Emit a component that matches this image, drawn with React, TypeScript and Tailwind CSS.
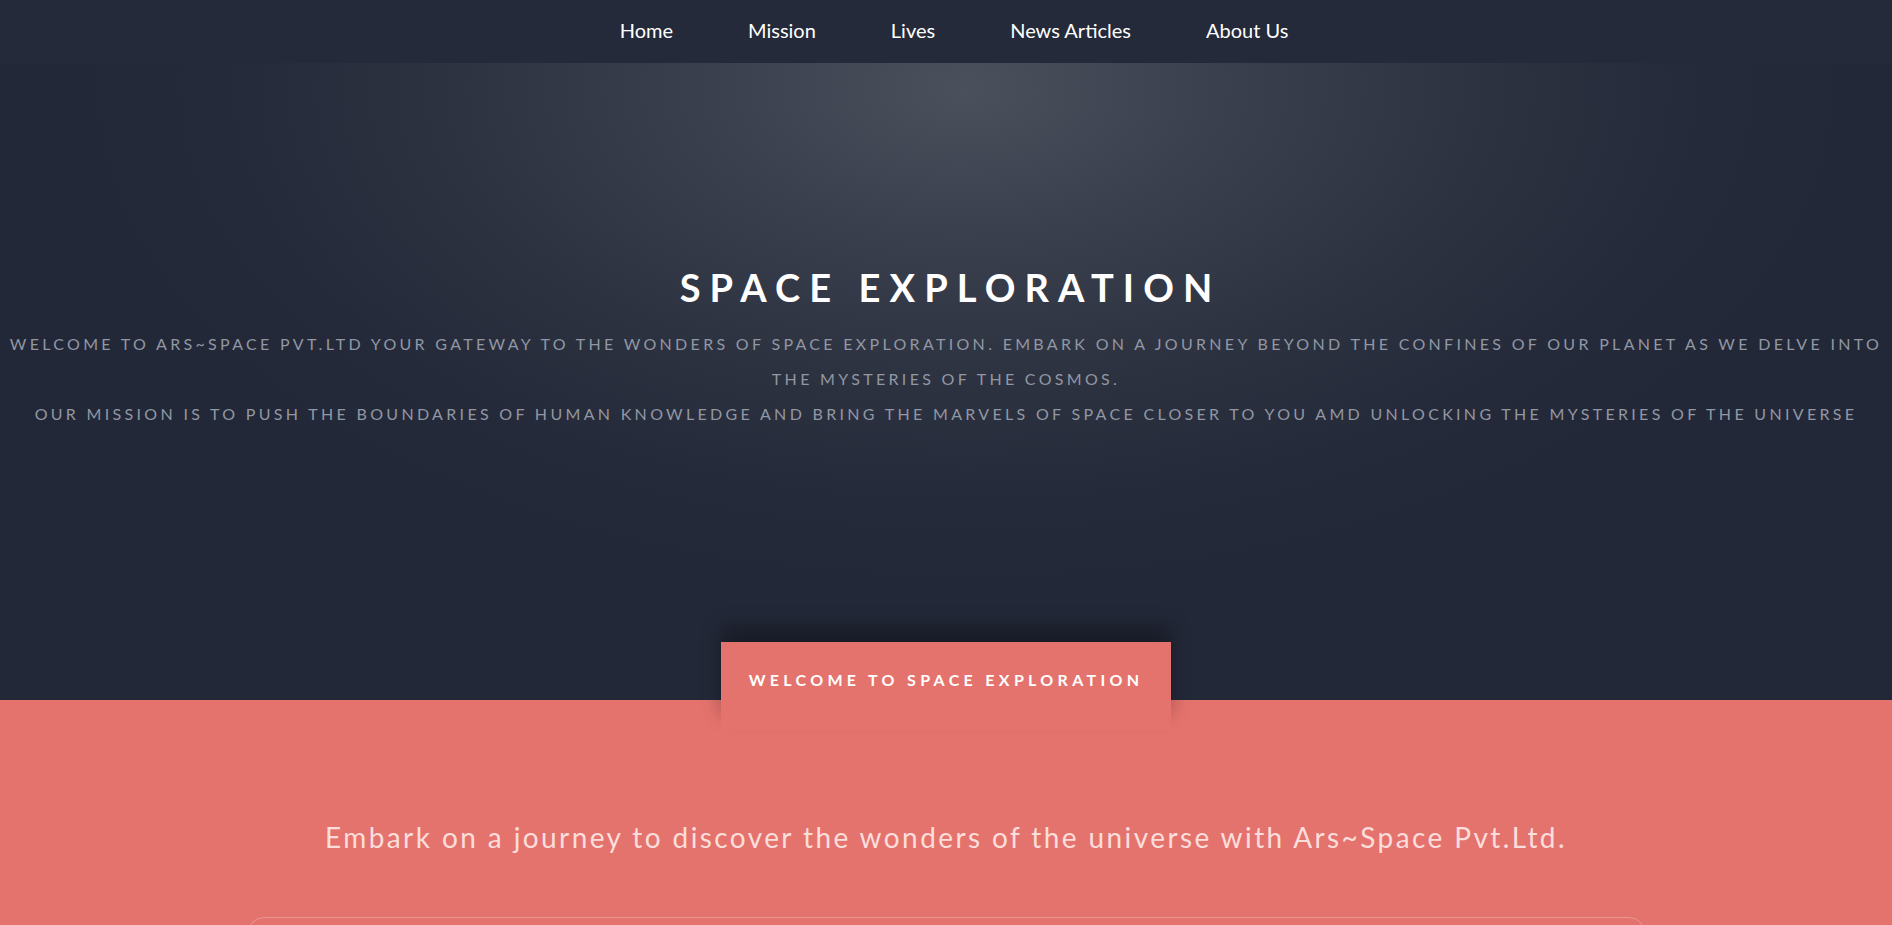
const navItems = ["Home", "Mission", "Lives", "News Articles", "About Us"];

const intro = [
  "Welcome to Ars~Space Pvt.Ltd your gateway to the wonders of space exploration. Embark on a journey beyond the confines of our planet as we delve into",
  "the mysteries of the cosmos.",
  "Our mission is to push the boundaries of human knowledge and bring the marvels of space closer to you amd unlocking the mysteries of the universe",
];

function Navbar() {
  return (
    <nav className="h-[63px] bg-[#242a39] flex items-center justify-center pl-4">
      <ul className="flex items-center gap-[75px]">
        {navItems.map((item) => (
          <li key={item}>
            <a href="#" className="text-white text-[20px] leading-none hover:opacity-80">
              {item}
            </a>
          </li>
        ))}
      </ul>
    </nav>
  );
}

function Hero() {
  return (
    <header className="h-[637px] bg-[#232838] bg-[radial-gradient(ellipse_48%_80%_at_51%_4%,#4b505d_0%,#3b404e_28%,#2d3241_58%,#252a3a_82%,#232838_100%)] flex flex-col items-center pt-[200px]">
      <h1 className="text-white font-bold text-[38px] leading-[48px] tracking-[0.24em] uppercase pl-[0.24em]">
        Space Exploration
      </h1>
      <div className="mt-[15px] text-center text-[#9197a3] text-[16px] leading-[35px] tracking-[0.207em] uppercase">
        {intro.map((line) => (
          <p key={line} className="whitespace-nowrap">
            {line}
          </p>
        ))}
      </div>
    </header>
  );
}

function Welcome() {
  return (
    <section className="bg-[#e5736d] flex flex-col items-center pb-10">
      <div className="relative z-10 -mt-[58px] w-[450px] h-[88px] bg-[#e5736d] shadow-[0_-16px_18px_rgba(0,0,0,0.3)] flex justify-center pt-[28px]">
        <h2 className="text-white font-bold text-[16px] leading-5 tracking-[0.27em] uppercase">
          Welcome to Space Exploration
        </h2>
      </div>
      <p className="mt-[88px] text-[#fbdedc] text-[28px] leading-[38px] tracking-[0.086em]">
        Embark on a journey to discover the wonders of the universe with Ars~Space Pvt.Ltd.
      </p>
      <div className="mt-[61px] w-[1397px] h-[200px] rounded-2xl border border-white/25"></div>
    </section>
  );
}

export default function App() {
  return (
    <div className="min-h-screen bg-[#e5736d] font-['Lato',sans-serif]">
      <Navbar />
      <Hero />
      <Welcome />
    </div>
  );
}
